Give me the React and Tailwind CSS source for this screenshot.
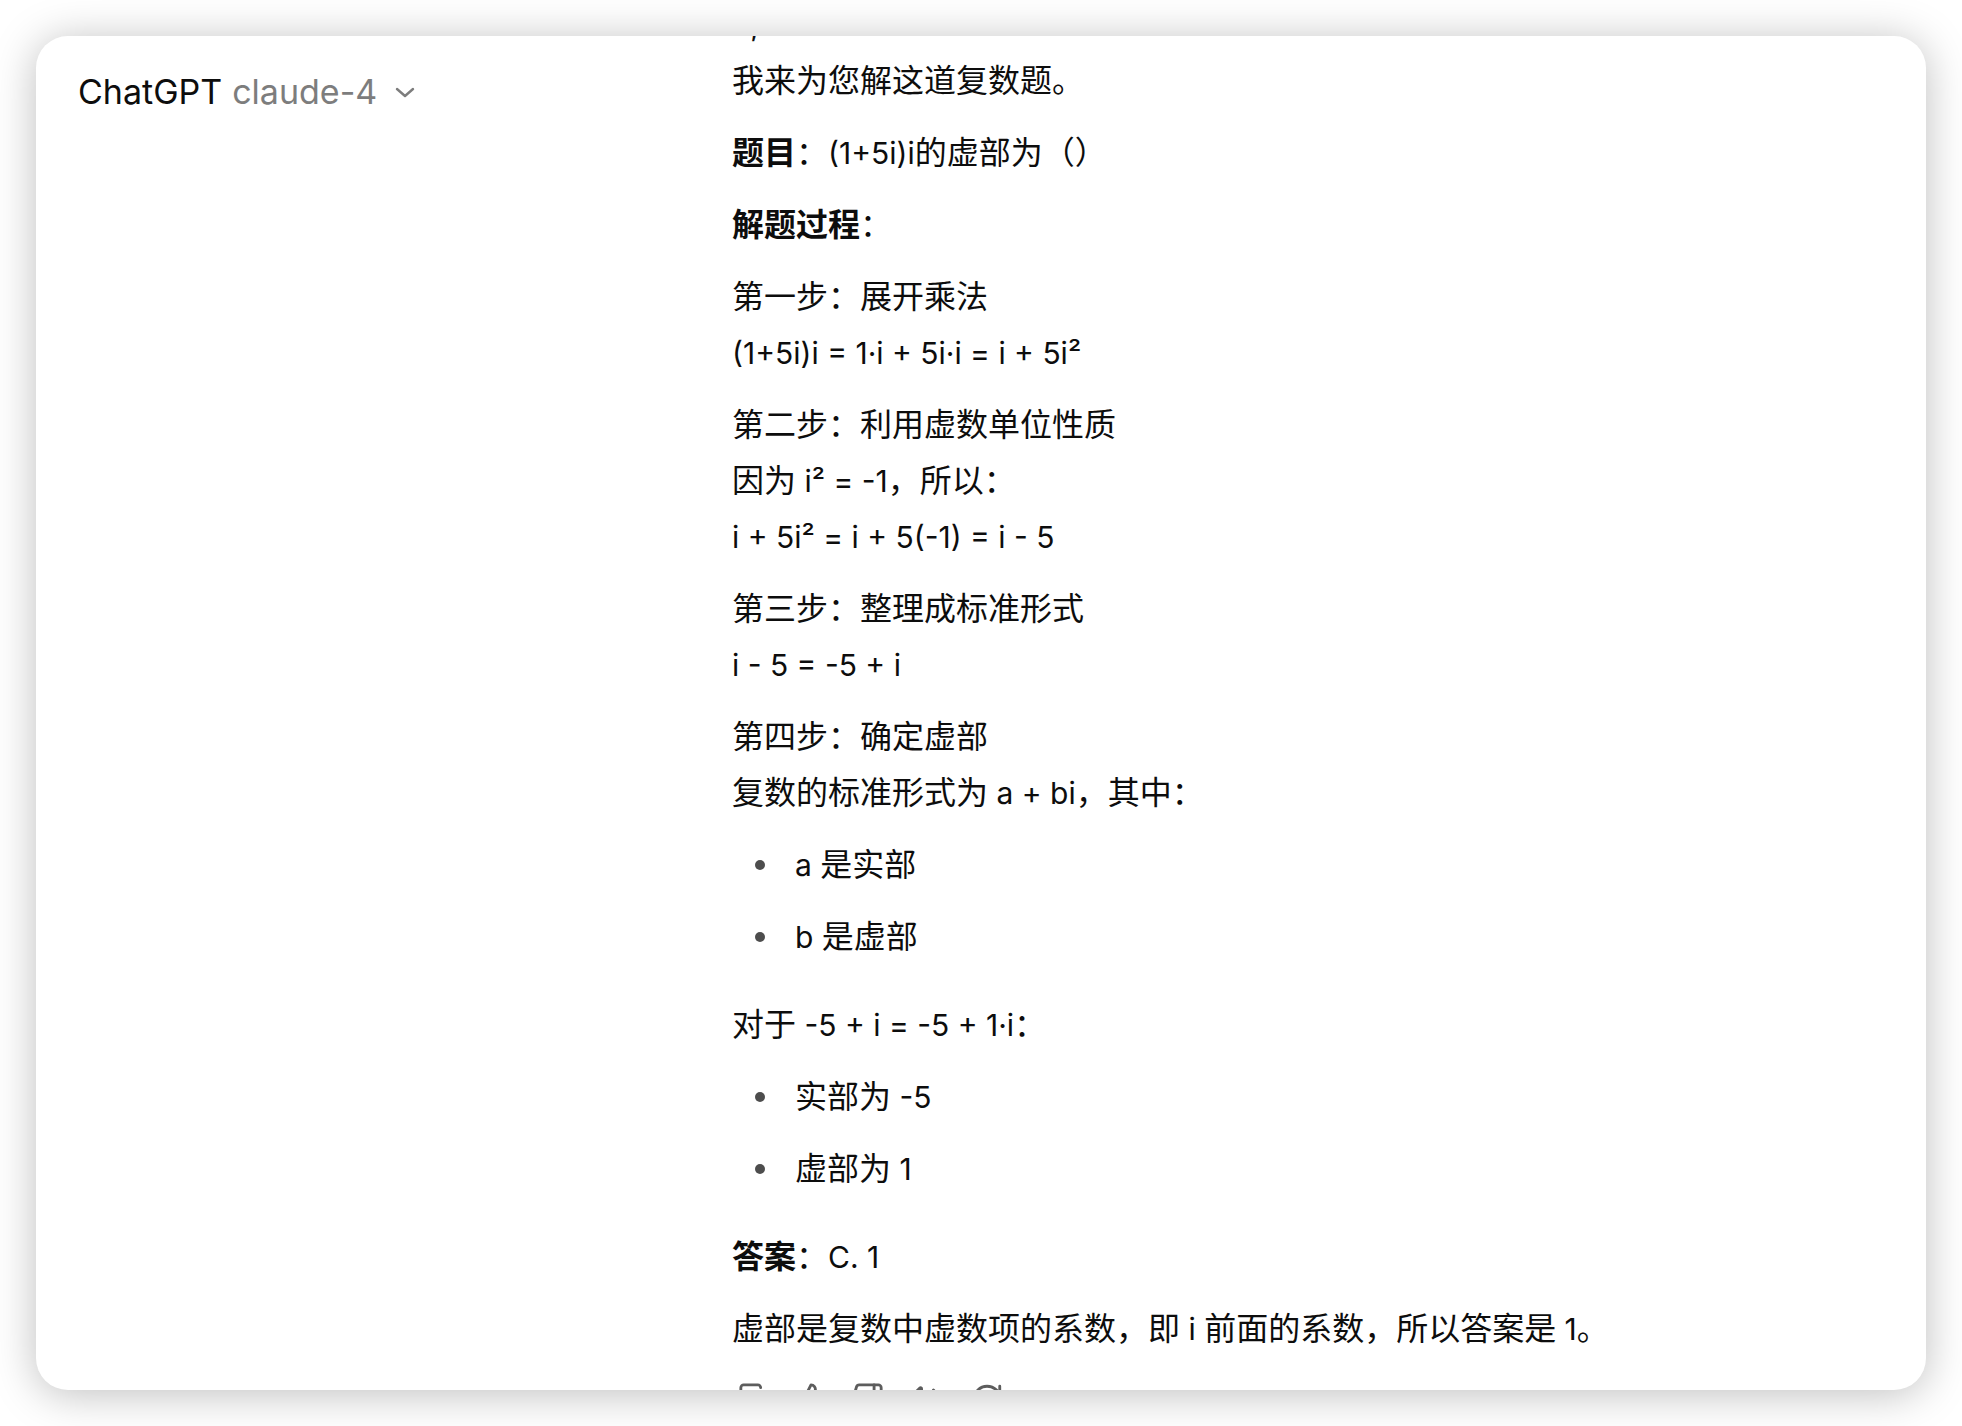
import React from "react";
import { Copy, ThumbsUp, ThumbsDown, Volume2, RefreshCw } from "lucide-react";

// CJK runs are set a touch larger than the latin runs, like the original renders them
const CJK = /([\u3000-\u303f\u4e00-\u9fff\uff00-\uffef]+)/;

const M = ({ t }) =>
    t
        .split(CJK)
        .filter(Boolean)
        .map((part, i) =>
            CJK.test(part) ? (
                <span key={i} className="text-[32px]">
                    {part}
                </span>
            ) : (
                <React.Fragment key={i}>{part}</React.Fragment>
            )
        );

const Para = ({ lines }) => (
    <p className="m-0">
        {lines.map((line, i) => (
            <React.Fragment key={i}>
                {i > 0 && <br />}
                {typeof line === "string" ? <M t={line} /> : line}
            </React.Fragment>
        ))}
    </p>
);

const Bullets = ({ items }) => (
    <ul className="mb-4 flex flex-col gap-4">
        {items.map((item) => (
            <li key={item} className="flex items-center gap-[30px] pl-[23px]">
                <span className="h-[10px] w-[10px] shrink-0 rounded-full bg-[#4d4d4d]"></span>
                <span>
                    <M t={item} />
                </span>
            </li>
        ))}
    </ul>
);

const Bold = ({ t }) => (
    <span className="font-semibold">
        <M t={t} />
    </span>
);

export default function App() {
    return (
        <div className="min-h-screen bg-white p-[36px] font-['Inter','Noto_Sans_CJK_SC',sans-serif]">
            <div className="flex h-[1354px] overflow-hidden rounded-[32px] bg-white shadow-[0_4px_44px_rgba(0,0,0,0.26)]">
                {/* header / left side */}
                <div className="w-[696px] shrink-0 pl-[42px] pt-[36px]">
                    <div className="flex items-center text-[34px] leading-[40px]">
                        <span className="text-[#0d0d0d]">ChatGPT</span>
                        <span className="ml-[10px] text-[#7d7d7d]">claude-4</span>
                        <svg className="ml-[18px]" width="20" height="11" viewBox="0 0 20 11" fill="none">
                            <polyline points="2,2 10,9 18,2" stroke="#7d7d7d" strokeWidth="2.4" strokeLinecap="round" strokeLinejoin="round" />
                        </svg>
                    </div>
                </div>

                {/* message, scrolled */}
                <div className="-mt-[39px] flex w-[1120px] flex-col gap-4 text-[30px] leading-[56px] text-[#0d0d0d]">
                    <Para lines={["4,", "我来为您解这道复数题。"]} />
                    <p className="m-0">
                        <Bold t="题目" />
                        <M t="：(1+5i)i的虚部为（）" />
                    </p>
                    <p className="m-0">
                        <Bold t="解题过程" />
                        <M t="：" />
                    </p>
                    <Para lines={["第一步：展开乘法", "(1+5i)i = 1·i + 5i·i = i + 5i²"]} />
                    <Para lines={["第二步：利用虚数单位性质", "因为 i² = -1，所以：", "i + 5i² = i + 5(-1) = i - 5"]} />
                    <Para lines={["第三步：整理成标准形式", "i - 5 = -5 + i"]} />
                    <Para lines={["第四步：确定虚部", "复数的标准形式为 a + bi，其中："]} />
                    <Bullets items={["a 是实部", "b 是虚部"]} />
                    <Para lines={["对于 -5 + i = -5 + 1·i："]} />
                    <Bullets items={["实部为 -5", "虚部为 1"]} />
                    <p className="m-0">
                        <Bold t="答案" />
                        <M t="：C. 1" />
                    </p>
                    <Para lines={["虚部是复数中虚数项的系数，即 i 前面的系数，所以答案是 1。"]} />

                    {/* action row, mostly cut off by the card edge */}
                    <div className="flex items-center gap-[22px] pl-[6px] pt-[9px] text-[#5d5d5d]">
                        <Copy size={34} strokeWidth={2} />
                        <ThumbsUp size={34} strokeWidth={2} />
                        <ThumbsDown size={34} strokeWidth={2} />
                        <Volume2 size={34} strokeWidth={2} />
                        <RefreshCw className="ml-[8px]" size={34} strokeWidth={2} />
                    </div>
                </div>
            </div>
        </div>
    );
}
